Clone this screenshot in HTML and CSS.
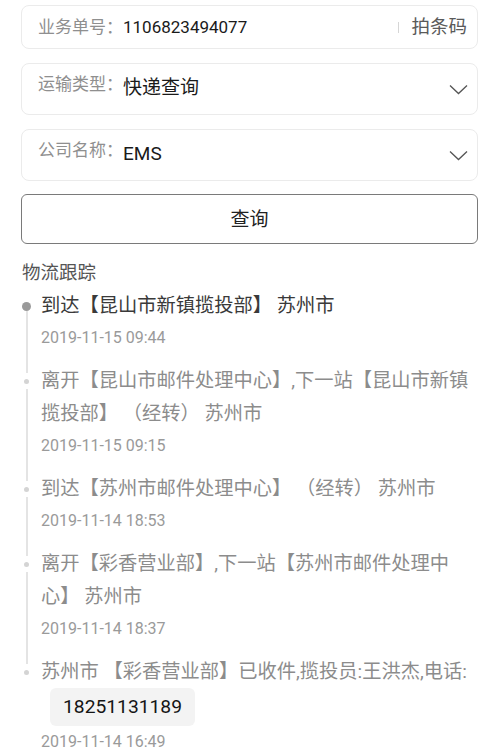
FILE: index.html
```html
<!DOCTYPE html>
<html lang="zh-CN">
<head>
<meta charset="utf-8">
<title>物流查询</title>
<link rel="stylesheet" href="styles.css">
</head>
<body>
<div class="page">
  <div class="card card-num">
    <span class="label">业务单号：</span>
    <span class="num-value">1106823494077</span>
    <span class="sep"></span>
    <span class="scan">拍条码</span>
  </div>
  <div class="card card-select">
    <span class="label label-top">运输类型：</span>
    <span class="sel-value">快递查询</span>
    <svg class="chev" width="19" height="11" viewBox="0 0 19 11"><path d="M1 1.5 L9.5 9.5 L18 1.5" fill="none" stroke="#555" stroke-width="1.3"/></svg>
  </div>
  <div class="card card-select">
    <span class="label label-top">公司名称：</span>
    <span class="sel-value">EMS</span>
    <svg class="chev" width="19" height="11" viewBox="0 0 19 11"><path d="M1 1.5 L9.5 9.5 L18 1.5" fill="none" stroke="#555" stroke-width="1.3"/></svg>
  </div>
  <button class="btn">查询</button>
  <div class="title">物流跟踪</div>
  <ul class="timeline">
    <li class="item first">
      <div class="text">到达【昆山市新镇揽投部】 苏州市</div>
      <div class="time">2019-11-15 09:44</div>
    </li>
    <li class="item">
      <div class="text">离开【昆山市邮件处理中心】,下一站【昆山市新镇揽投部】 （经转） 苏州市</div>
      <div class="time">2019-11-15 09:15</div>
    </li>
    <li class="item">
      <div class="text">到达【苏州市邮件处理中心】 （经转） 苏州市</div>
      <div class="time">2019-11-14 18:53</div>
    </li>
    <li class="item">
      <div class="text">离开【彩香营业部】,下一站【苏州市邮件处理中心】 苏州市</div>
      <div class="time">2019-11-14 18:37</div>
    </li>
    <li class="item last">
      <div class="text">苏州市 【彩香营业部】已收件,揽投员:王洪杰,电话:<span class="phone">18251131189</span></div>
      <div class="time">2019-11-14 16:49</div>
    </li>
  </ul>
</div>
</body>
</html>
```
FILE: styles.css
```css
* { box-sizing: border-box; }
html, body { margin: 0; padding: 0; background: #fff; }
body {
  font-family: Roboto, "Noto Sans CJK SC", sans-serif;
  color: #222;
  overflow: hidden;
}
.page {
  padding: 5px 22px 0 21px;
}
.card {
  border: 1px solid #ebebeb;
  border-radius: 8px;
  background: #fff;
  display: flex;
  margin-bottom: 14px;
}
.card-num {
  height: 44px;
  align-items: center;
  padding: 0 10px 0 16px;
}
.label {
  font-size: 17px;
  color: #8f8f8f;
  line-height: 24px;
  flex: none;
}
.num-value {
  font-size: 17px;
  color: #1a1a1a;
  line-height: 24px;
  flex: 1;
}
.sep {
  width: 1px;
  height: 11px;
  background: #d6d6d6;
  margin-right: 12px;
}
.scan {
  font-size: 18.5px;
  color: #5a5a5a;
  line-height: 24px;
}
.card-select {
  height: 52px;
  align-items: flex-start;
  padding: 0 9px 0 16px;
}
.card-select + .card-select { margin-bottom: 13px; }
.label-top {
  margin-top: 8px;
}
.sel-value {
  font-size: 19px;
  color: #1a1a1a;
  line-height: 26px;
  margin-top: 11px;
  flex: 1;
}
.chev {
  margin-top: 20px;
}
.btn {
  display: block;
  width: 100%;
  height: 50px;
  border: 1px solid #7a7a7a;
  border-radius: 6px;
  background: #fff;
  font-family: Roboto, "Noto Sans CJK SC", sans-serif;
  font-size: 19px;
  color: #222;
  padding: 0 0 3px 0;
  margin: 0;
}
.title {
  font-size: 18.5px;
  color: #555;
  line-height: 30px;
  margin-top: 14px;
  margin-left: 1px;
}
.timeline {
  list-style: none;
  margin: 1px 0 0 0;
  padding: 0;
}
.item {
  position: relative;
  padding-left: 20px;
  padding-bottom: 10px;
}
.item::before {
  content: "";
  position: absolute;
  left: 3px;
  top: 15px;
  width: 5px;
  height: 5px;
  border-radius: 50%;
  background: #d4d4d4;
}
.item::after {
  content: "";
  position: absolute;
  left: 4.5px;
  width: 2px;
  top: 25px;
  bottom: -9px;
  background: #e4e4e4;
}
.item.first::before {
  left: 1px;
  top: 13px;
  width: 9px;
  height: 9px;
  background: #9a9a9a;
}
.item.first::after { top: 22px; }
.item.last::after { display: none; }
.text {
  font-size: 19.25px;
  line-height: 33px;
  color: #8c8c8c;
}
.item.first .text { color: #3a3a3a; }
.time {
  font-size: 16px;
  line-height: 32px;
  color: #9a9a9a;
}
.phone {
  display: inline-block;
  vertical-align: middle;
  margin-left: 9px;
  padding: 4px 13px;
  line-height: 30px;
  background: #f3f3f3;
  border-radius: 6px;
  color: #151515;
}
```
